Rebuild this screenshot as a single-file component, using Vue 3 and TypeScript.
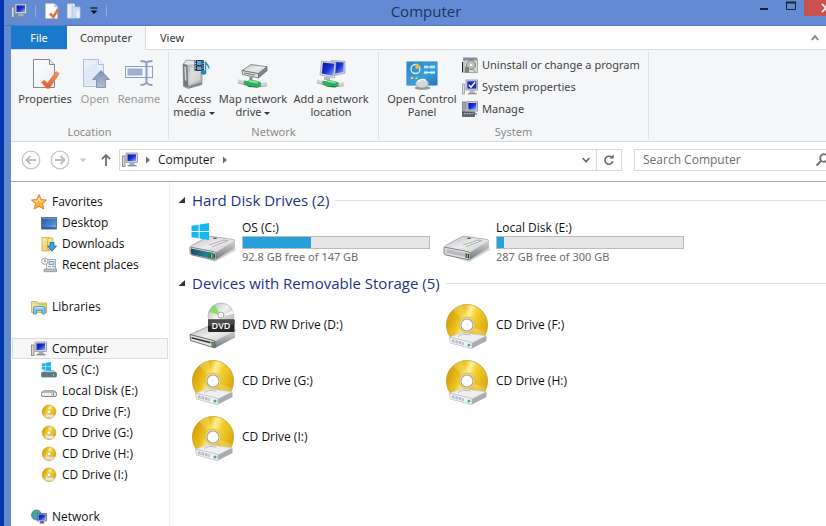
<script setup lang="ts">
import { ref } from 'vue'

interface RibbonButton {
  icon: string
  lines: string[]
  kind: string
  disabled?: boolean
  menu?: boolean
}

interface NavItem {
  icon: string
  label: string
}

interface NavSection {
  head: NavItem
  children: NavItem[]
}

interface Drive {
  icon: string
  name: string
  used?: number
  detail?: string
  badge?: string
}

interface DriveGroup {
  title: string
  drives: Drive[]
}

const locationButtons: RibbonButton[] = [
  { icon: 'i-properties', lines: ['Properties'], kind: 'w-properties' },
  { icon: 'i-open', lines: ['Open'], kind: 'w-open', disabled: true },
  { icon: 'i-rename', lines: ['Rename'], kind: 'w-rename', disabled: true },
]

const networkButtons: RibbonButton[] = [
  { icon: 'i-media', lines: ['Access', 'media'], kind: 'w-media', menu: true },
  { icon: 'i-mapdrive', lines: ['Map network', 'drive'], kind: 'w-map', menu: true },
  { icon: 'i-addnet', lines: ['Add a network', 'location'], kind: 'w-add' },
]

const systemLinks: NavItem[] = [
  { icon: 'i-uninstall', label: 'Uninstall or change a program' },
  { icon: 'i-sysprops', label: 'System properties' },
  { icon: 'i-manage', label: 'Manage' },
]

const sections: NavSection[] = [
  {
    head: { icon: 'i-star', label: 'Favorites' },
    children: [
      { icon: 'i-desktop', label: 'Desktop' },
      { icon: 'i-downloads', label: 'Downloads' },
      { icon: 'i-recent', label: 'Recent places' },
    ],
  },
  { head: { icon: 'i-libraries', label: 'Libraries' }, children: [] },
  {
    head: { icon: 'i-computer', label: 'Computer' },
    children: [
      { icon: 'i-os-small', label: 'OS (C:)' },
      { icon: 'i-disk-small', label: 'Local Disk (E:)' },
      { icon: 'i-cd-small', label: 'CD Drive (F:)' },
      { icon: 'i-cd-small', label: 'CD Drive (G:)' },
      { icon: 'i-cd-small', label: 'CD Drive (H:)' },
      { icon: 'i-cd-small', label: 'CD Drive (I:)' },
    ],
  },
  { head: { icon: 'i-network', label: 'Network' }, children: [] },
]

const groups: DriveGroup[] = [
  {
    title: 'Hard Disk Drives (2)',
    drives: [
      { icon: 'i-os', name: 'OS (C:)', used: 36.5, detail: '92.8 GB free of 147 GB' },
      { icon: 'i-disk', name: 'Local Disk (E:)', used: 4, detail: '287 GB free of 300 GB' },
    ],
  },
  {
    title: 'Devices with Removable Storage (5)',
    drives: [
      { icon: 'i-dvd', name: 'DVD RW Drive (D:)', badge: 'DVD' },
      { icon: 'i-cd', name: 'CD Drive (F:)' },
      { icon: 'i-cd', name: 'CD Drive (G:)' },
      { icon: 'i-cd', name: 'CD Drive (H:)' },
      { icon: 'i-cd', name: 'CD Drive (I:)' },
    ],
  },
]

const selected = ref<string>('Computer')
const query = ref<string>('')
</script>

<template>
  <div class="desktop">
    <svg class="sprite" aria-hidden="true">
      <defs>
        <linearGradient id="g-screen" x1="0" y1="0" x2="1" y2="1">
          <stop offset="0" stop-color="#0a12a8" /><stop offset="0.5" stop-color="#1a2fd0" /><stop offset="1" stop-color="#8fb4f5" />
        </linearGradient>
        <linearGradient id="g-gold" x1="0" y1="0.3" x2="1" y2="0.7">
          <stop offset="0" stop-color="#d09a08" /><stop offset="0.3" stop-color="#ecc31c" /><stop offset="0.45" stop-color="#fff199" />
          <stop offset="0.6" stop-color="#f2d02c" /><stop offset="1" stop-color="#d8a30e" />
        </linearGradient>
        <linearGradient id="g-top" x1="0" y1="0" x2="1" y2="1">
          <stop offset="0" stop-color="#b9babc" /><stop offset="0.5" stop-color="#ececed" /><stop offset="1" stop-color="#c4c5c7" />
        </linearGradient>
        <linearGradient id="g-side" x1="0" y1="0" x2="0" y2="1">
          <stop offset="0" stop-color="#d4d5d7" /><stop offset="1" stop-color="#77797c" />
        </linearGradient>
        <linearGradient id="g-teal" x1="0" y1="0" x2="1" y2="0">
          <stop offset="0" stop-color="#1b4a63" /><stop offset="0.7" stop-color="#23849a" /><stop offset="1" stop-color="#1c5f58" />
        </linearGradient>
        <linearGradient id="g-doc" x1="0" y1="0" x2="1" y2="1">
          <stop offset="0" stop-color="#ffffff" /><stop offset="1" stop-color="#eceef2" />
        </linearGradient>
        <linearGradient id="g-orange" x1="0" y1="0" x2="0" y2="1">
          <stop offset="0" stop-color="#f39a6a" /><stop offset="1" stop-color="#e05a28" />
        </linearGradient>
        <linearGradient id="g-arrow" x1="0" y1="0" x2="0" y2="1">
          <stop offset="0" stop-color="#7f91b5" /><stop offset="1" stop-color="#b4bed2" />
        </linearGradient>
        <linearGradient id="g-folder" x1="0" y1="0" x2="1" y2="1">
          <stop offset="0" stop-color="#fbeeb0" /><stop offset="1" stop-color="#e6bf55" />
        </linearGradient>
        <linearGradient id="g-panel" x1="0" y1="0" x2="1" y2="1">
          <stop offset="0" stop-color="#2a86c8" /><stop offset="0.6" stop-color="#3a9fdd" /><stop offset="1" stop-color="#2473b4" />
        </linearGradient>
        <linearGradient id="g-desk" x1="0" y1="0" x2="1" y2="1">
          <stop offset="0" stop-color="#2b55a3" /><stop offset="0.6" stop-color="#4a83cc" /><stop offset="1" stop-color="#88b8e8" />
        </linearGradient>
        <linearGradient id="g-silver" x1="0" y1="0" x2="1" y2="1">
          <stop offset="0" stop-color="#a9abad" /><stop offset="0.45" stop-color="#f4f4f4" /><stop offset="0.6" stop-color="#d2d4d5" /><stop offset="1" stop-color="#a4a6a8" />
        </linearGradient>
        <linearGradient id="g-tower" x1="0" y1="0" x2="1" y2="1">
          <stop offset="0" stop-color="#9c9ea0" /><stop offset="0.5" stop-color="#d6d7d8" /><stop offset="1" stop-color="#a2a4a6" />
        </linearGradient>
      </defs>

      <symbol id="i-computer" viewBox="0 0 16 16">
        <rect x="0.5" y="4" width="2.5" height="10.5" fill="#d6dbd2" stroke="#7a8078" stroke-width="0.8" />
        <rect x="4" y="1" width="11.5" height="9.5" rx="0.6" fill="#d5d8de" stroke="#8b8f99" stroke-width="0.8" />
        <rect x="5.5" y="2.4" width="8.5" height="6.7" fill="url(#g-screen)" />
        <path d="M8 10.8h4l1 2.2H7z" fill="#a9adb3" />
        <path d="M5.5 13h9v1.4h-9z" fill="#8a8e95" />
      </symbol>

      <symbol id="i-check-doc" viewBox="0 0 16 16">
        <path d="M1.5 0.5h9l3 3v12h-12z" fill="#fbfbfc" stroke="#b7bac2" stroke-width="0.8" />
        <path d="M10.5 0.5v3h3" fill="#dfe2e8" stroke="#a5a9b2" stroke-width="0.8" />
        <path d="M6 10.5l3.3 3.4L14 6.2" fill="none" stroke="#e8713f" stroke-width="2.6" />
      </symbol>

      <symbol id="i-new-folder" viewBox="0 0 16 16">
        <path d="M0.500 1h7v14H0.500z" fill="#e8edf6" stroke="#c8d2e4" />
        <path d="M7 4h6v11H5V2.5z" fill="#cfdaec" stroke="#b3c3de" stroke-width="0.8" />
        <path d="M9.500 7L12.500 8v7h-3z" fill="#e9eff8" />
      </symbol>

      <symbol id="i-properties" viewBox="0 0 32 32">
        <path d="M4.500 1.500h16l5 5v23h-21z" fill="url(#g-doc)" stroke="#85888e" />
        <path d="M20.500 1.500v5h5" fill="#e6e8ec" stroke="#85888e" />
        <path d="M12.500 24.500l2.700-2.400 3.300 3.100 8.700-11.700 3 2-9.800 14.800h-2.800z" fill="url(#g-orange)" stroke="#e07a50" stroke-width="0.7" />
      </symbol>

      <symbol id="i-open" viewBox="0 0 32 32">
        <path d="M4.500 1.500h15l5 5v22h-20z" fill="#e9eff9" stroke="#aebfdc" />
        <path d="M5 14L19 3v24H5z" fill="#dfe8f6" />
        <path d="M19.500 1.500v5h5" fill="#f5f8fc" stroke="#aebfdc" />
        <path d="M22 12.500l8.500 9h-4v8h-9v-8h-4z" fill="url(#g-arrow)" stroke="#7486ab" stroke-width="0.8" />
      </symbol>

      <symbol id="i-rename" viewBox="0 0 32 32">
        <rect x="2.500" y="8.500" width="27" height="11" fill="#f0f4fb" stroke="#8ba0c6" />
        <rect x="5" y="11" width="14" height="6" fill="#a3b2cc" stroke="#8799b9" stroke-width="0.7" />
        <path d="M17.500 3c3 0 5 0.500 6 2 1-1.500 3-2 6-2M23.500 5v20M17.500 27c3 0 5-0.800 6-2.500 1 1.700 3 2.500 6 2.500" fill="none" stroke="#8f9fbd" stroke-width="2" />
      </symbol>

      <symbol id="i-media" viewBox="0 0 32 32">
        <path d="M5 6l3.500-4L24 3.500v23L10 30.500 5.500 28.500z" fill="url(#g-tower)" stroke="#8d8f91" stroke-width="0.700" />
        <path d="M5 6l4.500 1 1 23L5.500 28z" fill="#77797b" />
        <path d="M6.300 8.500l1.700 0.500 0.500 14-1.500-0.800z" fill="#d4d5d6" />
        <path d="M6 5.500l3-3L24 4v1.500L9.500 6.800z" fill="#e6e7e8" />
        <path d="M12 10l10-1v13l-9 3z" fill="#e4e5e6" opacity="0.500" />
        <path d="M10.500 28l13.500-4v2.500l-13.500 4z" fill="#858789" />
        <rect x="16.500" y="2" width="9.500" height="11" fill="#293846" />
        <path d="M19 3h4.500v4H19zM19 8.500h4.500v3.500H19z" fill="#5da8d8" />
        <path d="M17.500 2.500v10M25 2.500v10" stroke="#d9e3ec" stroke-dasharray="1.200 1.200" />
        <path d="M27.500 14V3.500c0.500 3 3.500 3.500 3.500 7" fill="none" stroke="#2a93cf" stroke-width="1.500" />
        <ellipse cx="25.600" cy="14.500" rx="2.700" ry="2.200" fill="#1f86c6" />
      </symbol>

      <symbol id="i-cable" viewBox="0 0 32 10">
        <path d="M1 3l7 2M23 7l7-1" stroke="#d2d4d4" stroke-width="3.600" />
        <path d="M1 5l7 1.800M23 8.800l7-1" stroke="#9b9d9d" stroke-width="0.800" />
        <path d="M7 2.500l4 0.500 1.500-1.500 8 1.500 3.500 1.500v4L12 8 6.500 6.500z" fill="#2fae5b" />
        <path d="M12 2l9 1.600v2L12 4z" fill="#8fe0a6" />
        <path d="M7 6.500l5.500 1.500L24 8.500l-4 1.200-8-0.700z" fill="#13773a" />
      </symbol>

      <symbol id="i-mapdrive" viewBox="0 0 32 32">
        <path d="M5 12.500L14 6.500l16 2.200-8.500 7z" fill="url(#g-top)" stroke="#7d7f81" stroke-width="0.8" />
        <path d="M5 12.500l16.500 3.200V20L5.500 16.500z" fill="#dedfe0" stroke="#67696b" stroke-width="0.8" />
        <path d="M21.500 15.700L30 8.700v4L21.500 20z" fill="#85878a" stroke="#67696b" stroke-width="0.8" />
        <path d="M7 14.300l11 2.300v1.200L7 15.500z" fill="#85878a" />
        <path d="M14 19v3" stroke="#8a8c8e" stroke-width="3" />
        <use href="#i-cable" x="0" y="20" width="32" height="10" />
      </symbol>

      <symbol id="i-addnet" viewBox="0 0 32 32">
        <path d="M16 2.500l14 0.800v12L17 18z" fill="#c7cdda" stroke="#969eae" stroke-width="0.7" />
        <path d="M18 4l10.500 0.600v9.400L18 16z" fill="url(#g-screen)" />
        <path d="M6.500 3l14.500 1.500L19.500 20 5 17z" fill="#d7dbe4" stroke="#969eae" stroke-width="0.7" />
        <path d="M8 4.600l11.500 1.200L18.300 18 6.700 15.600z" fill="url(#g-screen)" />
        <path d="M9 19h6v3H9z" fill="#b3b8c2" />
        <use href="#i-cable" x="1" y="20" width="30" height="10" />
      </symbol>

      <symbol id="i-panel" viewBox="0 0 32 32">
        <rect x="0.500" y="3.500" width="31" height="24" rx="1" fill="url(#g-panel)" stroke="#89b5d6" />
        <circle cx="9.500" cy="11" r="4.500" fill="none" stroke="#d5effd" stroke-width="1.300" />
        <path d="M9.500 11V5.500a5 5 0 0 1 5 5z" fill="#f5b942" />
        <path d="M18 7.500h4v3h-4zM24 7.500h5v3h-5zM18 13h4v3h-4zM24 13h5v3h-5z" fill="#8fcdf2" />
        <path d="M18 9h11M18 14.500h11" stroke="#eaf8ff" />
        <circle cx="6" cy="20" r="1.300" fill="#f2c95e" /><circle cx="10.500" cy="20" r="1.300" fill="#9ed67c" />
        <ellipse cx="16.500" cy="30" rx="8" ry="1.700" fill="#8f9aa4" />
        <ellipse cx="16" cy="25.500" rx="6.500" ry="4.500" fill="#d5d8db" stroke="#8c949a" stroke-width="0.7" />
        <path d="M12 24c1-2.500 5-3.500 8-1.500" fill="none" stroke="#ffffff" stroke-width="1.300" />
      </symbol>

      <symbol id="i-uninstall" viewBox="0 0 16 16">
        <rect x="2" y="2" width="13.500" height="13.500" fill="#d8dcd6" stroke="#969b94" stroke-width="0.8" />
        <rect x="1" y="0.500" width="14" height="3" fill="#8488ae" />
        <path d="M0.500 5v10.500" stroke="#222" stroke-width="1.200" />
        <circle cx="9" cy="8" r="4.500" fill="#b7c1b9" stroke="#7e877f" />
        <circle cx="9" cy="8" r="1.300" fill="#fff" />
        <path d="M3 9.500l4 1v5H3z" fill="#7b837d" /><path d="M10 12l4 3.500" stroke="#848a80" />
        <path d="M11 2.500l3-1v2z" fill="#d49a4a" />
      </symbol>

      <symbol id="i-sysprops" viewBox="0 0 16 16">
        <rect x="0.500" y="5" width="2" height="10" fill="#dcdfe2" stroke="#8a8d90" stroke-width="0.7" />
        <rect x="4" y="1" width="11.500" height="10" fill="#d6d9df" stroke="#8a8e98" stroke-width="0.8" />
        <rect x="5.300" y="2.300" width="9" height="7.300" fill="#1a2cc4" />
        <path d="M7 6l2 2.200 4-5" fill="none" stroke="#fff" stroke-width="1.500" />
        <path d="M8 11.200h4l1 3H7z" fill="#b1b4b9" /><path d="M6 14h8.500v1.300H6z" fill="#888b90" />
      </symbol>

      <symbol id="i-manage" viewBox="0 0 16 16">
        <rect x="0.500" y="1" width="3.500" height="10" fill="#9fa7a5" stroke="#6f7675" stroke-width="0.7" />
        <rect x="5" y="0.700" width="10.500" height="9.300" fill="#d4d7e2" stroke="#8287a0" stroke-width="0.8" />
        <rect x="6.300" y="2" width="8" height="6.600" fill="url(#g-screen)" />
        <path d="M3 8h4l2 2v2H3z" fill="#aab3b4" />
        <rect x="0.500" y="11" width="12" height="4.500" fill="#5c6670" stroke="#414b55" stroke-width="0.7" />
        <path d="M2 12.700h9" stroke="#c7d0d6" stroke-dasharray="1.500 1" /><path d="M11 11l4 2.500" stroke="#777e87" stroke-width="1.200" />
      </symbol>

      <symbol id="i-star" viewBox="0 0 16 16">
        <path d="M8 0.600l2.200 5 5.300 0.500-4 3.600 1.200 5.300L8 12.200 3.300 15l1.200-5.300-4-3.600 5.300-0.500z" fill="#f9b64a" stroke="#e27a1c" stroke-width="1" />
        <path d="M8 3l1.400 3.500 3 0.300-3 1.500L8 6.500 5 8 3 6.800l3.400-0.300z" fill="#fde9a8" />
      </symbol>

      <symbol id="i-desktop" viewBox="0 0 16 16">
        <rect x="0.500" y="2.500" width="15" height="11.500" fill="url(#g-desk)" stroke="#5c7796" />
        <path d="M1 12.500h14v1.200H1z" fill="#264a80" />
        <path d="M1.500 3.500h13" stroke="#7ba4da" stroke-width="0.7" />
      </symbol>

      <symbol id="i-downloads" viewBox="0 0 16 16">
        <path d="M1 1.500h8V15H1z" fill="url(#g-folder)" stroke="#d0a945" stroke-width="0.8" />
        <path d="M9 2h3v11H6.500V3z" fill="#f8dd86" stroke="#d0a945" stroke-width="0.7" />
        <path d="M9 6.500h4V10h2.500L11 15.300 6.500 10H9z" fill="#3aa0e4" stroke="#1967b0" stroke-width="0.8" />
      </symbol>

      <symbol id="i-recent" viewBox="0 0 16 16">
        <path d="M5.500 2.500h9V14h-9z" fill="#edf3f8" stroke="#8d99a4" stroke-width="0.8" />
        <path d="M3 12h12.500v2.700H3z" fill="#bac2c8" stroke="#8a939a" stroke-width="0.7" />
        <path d="M8 4.500h5v3H8zM7 9.500h3M11 9.500h3" fill="#c8dcef" stroke="#6892b9" stroke-width="0.8" />
        <circle cx="3.800" cy="4.200" r="3.200" fill="#fafbfb" stroke="#8c9298" stroke-width="0.8" />
        <path d="M3.800 2.200v2.200h1.600" fill="none" stroke="#555" stroke-width="0.7" />
      </symbol>

      <symbol id="i-libraries" viewBox="0 0 16 16">
        <path d="M0.500 2.500h5l1.500 1.500h8.500v9.500h-15z" fill="url(#g-folder)" stroke="#cfa649" stroke-width="0.8" />
        <path d="M1.500 4h5l1 1.500h7" fill="none" stroke="#9fcf76" stroke-width="0.8" />
        <path d="M2.500 15V9.500q0-2 2-2h7.500q2 0 2 2V15h-3v-3.500H5.500V15z" fill="#7cc2e6" stroke="#3d8fc0" stroke-width="0.8" />
        <path d="M3.500 9.300q0.300-1 1.300-1h7q1 0 1.300 1z" fill="#d6f0fb" />
      </symbol>

      <symbol id="i-flag" viewBox="0 0 20 18">
        <path d="M0.500 3l7.500-1.200v6.700H0.500zM9 1.600L19 0v8.500H9zM0.500 9.500H8v6.700L0.500 15zM9 9.500h10V18L9 16.400z" fill="#14b8ee" />
      </symbol>

      <symbol id="i-os-small" viewBox="0 0 16 16">
        <path d="M0.500 11l3-2.500h9l3 2.500z" fill="#c9cccf" stroke="#8d9093" stroke-width="0.6" />
        <rect x="0.500" y="10.500" width="15" height="4.500" rx="1" fill="#4f7e8a" stroke="#6f7578" stroke-width="0.8" />
        <path d="M12.500 12v2" stroke="#7be06a" />
        <use href="#i-flag" x="0.500" y="0" width="10" height="9" />
      </symbol>

      <symbol id="i-disk-small" viewBox="0 0 16 16">
        <path d="M0.500 9.500L3 7.500h10l2.500 2z" fill="#dddfe0" stroke="#8d8f91" stroke-width="0.7" />
        <rect x="0.500" y="9" width="15" height="4.500" rx="1.500" fill="#eceded" stroke="#77797b" stroke-width="0.9" />
        <path d="M10.500 11.300h1M12.500 10.300v2" stroke="#5a8a4a" />
      </symbol>

      <symbol id="i-cd-small" viewBox="0 0 16 16">
        <circle cx="8" cy="7.800" r="6.800" fill="url(#g-gold)" stroke="#c4961a" stroke-width="0.6" />
        <circle cx="8" cy="7.800" r="2" fill="#fff" stroke="#c9a24c" stroke-width="0.7" />
        <path d="M3.500 11.500l3-1 7 0.500-2 3-6.500-0.500z" fill="#ece6d6" stroke="#cbbf9c" stroke-width="0.5" />
      </symbol>

      <symbol id="i-network" viewBox="0 0 16 16">
        <circle cx="5.500" cy="6" r="5" fill="#3f9fd0" stroke="#2a6f9f" stroke-width="0.7" />
        <path d="M2 3.500q3-3 6-1.500l-2 2.500-3 1.500zM1.500 7l3 1 1 3q-3-1-4-4z" fill="#49b35a" />
        <rect x="6.500" y="4.500" width="9" height="7.500" fill="#c9cfdb" stroke="#4c5a80" stroke-width="0.7" />
        <rect x="7.500" y="5.500" width="7" height="5.500" fill="url(#g-screen)" />
        <path d="M9.500 12h3l1 2.500H8.500z" fill="#58658a" />
      </symbol>

      <symbol id="i-disk" viewBox="0 0 48 48">
        <path d="M4 37l21 5 21-12 1 2-21 12z" fill="#bfc0c2" opacity="0.700" />
        <path d="M1 30q0-1.500 1.500-2.500L18 19q2-1 4-0.700l22.500 3.200q2 0.500 1 2L27 35z" fill="url(#g-top)" stroke="#97999b" stroke-width="0.7" />
        <path d="M27 34.500l19-12v6.500q0 1-1 1.500L27 41.500z" fill="url(#g-side)" />
        <path d="M1 30q0-1 1.500-0.700L25 33.700q2 0.500 2 2v4.500q0 2-2 1.500L3 37q-2-0.600-2-2z" fill="#dcdddf" stroke="#696b6e" stroke-width="0.800" />
        <path d="M3.500 31.300L22 35.200v3.600L3.500 35z" fill="#b9babe" />
        <path d="M22.500 35.300l3.500 0.700v4.500l-3.500-0.800z" fill="#343a33" /><path d="M24.300 36.300v3.500" stroke="#5fe03c" stroke-width="1.300" />
        <path d="M20 27l15-5 4 0.600-16 6.200" fill="none" stroke="#aeb0b2" /><ellipse cx="26" cy="20.300" rx="2" ry="0.800" fill="#55585b" />
      </symbol>

      <symbol id="i-os" viewBox="0 0 48 48">
        <use href="#i-disk" width="48" height="48" />
        <path d="M2 30.500L24.500 35v6L3.500 36.500q-1.500-0.500-1.500-2z" fill="url(#g-teal)" />
        <path d="M22.800 35.500v4.500" stroke="#78dd48" stroke-width="1.300" />
        <use href="#i-flag" x="2" y="5" width="19" height="17" />
      </symbol>

      <symbol id="i-dvd" viewBox="0 0 48 48">
        <path d="M1 33.500L20 25l25 3.500q2 0.500 1 2L26 41z" fill="url(#g-top)" stroke="#8b8d8f" stroke-width="0.7" />
        <path d="M26 40.500l20-11v7L26 47z" fill="url(#g-side)" />
        <path d="M1 33.500l25 6.500v7L1.500 39.500z" fill="#e5e6e7" stroke="#4f5153" stroke-width="0.800" />
        <path d="M2.500 36l19 4.800v1.800l-19-5z" fill="#303234" />
        <path d="M22.500 40.500l3 0.700V46l-3-0.800z" fill="#343a33" /><path d="M24 41.500V45" stroke="#5fe03c" stroke-width="1.300" />
        <circle cx="32" cy="15" r="13" fill="url(#g-silver)" stroke="#b3b5b7" stroke-width="0.7" />
        <path d="M32 15L20 10.500q2-5 6-7z" fill="#7edc58" opacity="0.800" /><path d="M32 15l12.500-2v-4z" fill="#fff" opacity="0.800" />
        <circle cx="32" cy="14" r="3" fill="#fff" stroke="#a9abad" />
        <rect x="19" y="18.500" width="26.500" height="12.500" rx="1" fill="#262728" />
        <path d="M19 18.500h26.500v5L19 25z" fill="#4a4b4c" />
      </symbol>

      <symbol id="i-cd" viewBox="0 0 48 48">
        <circle cx="24" cy="24" r="20.600" fill="url(#g-gold)" stroke="#c29a25" stroke-width="0.7" />
        <path d="M24 24L10 8.500q4-4 9-5zM24 24l19 7q-2 5-5 8z" fill="#fff6b8" opacity="0.250" />
        <circle cx="24" cy="24" r="8" fill="#f0dc91" stroke="#d2b24c" stroke-width="0.7" />
        <circle cx="24" cy="24" r="6" fill="#fff" stroke="#b1a98f" stroke-width="1.200" />
        <path d="M7 36l12-4.500 24 3.300L29 42.500z" fill="#eeeff2" stroke="#c3c5ca" stroke-width="0.6" />
        <path d="M29 42l14.500-7v5L29 47.500z" fill="#a9acb5" />
        <path d="M6.500 36L29 41.500v6.300L7.500 42z" fill="#f2f3f6" stroke="#b5b8c1" stroke-width="0.7" />
        <path d="M9 38l12 3.200v3L9 41z" fill="#b9bcc8" /><path d="M12 38.500v3.300M15.500 39.500v3.300M19 40.500v3.300" stroke="#eef0f4" stroke-width="0.800" />
        <circle cx="26" cy="44" r="1.600" fill="#35c25a" />
        <path d="M15 35.500l5-2.500 7 1" fill="none" stroke="#b8a470" stroke-width="0.700" />
      </symbol>
    </svg>

    <div class="window">
      <header class="titlebar">
        <div class="quick">
          <svg class="s16"><use href="#i-computer" /></svg>
          <span class="quick-rule"></span>
          <button type="button" class="plain" aria-label="Properties"><svg class="s16"><use href="#i-check-doc" /></svg></button>
          <button type="button" class="plain" aria-label="New folder"><svg class="s16"><use href="#i-new-folder" /></svg></button>
          <button type="button" class="plain" aria-label="Customize Quick Access Toolbar">
            <svg class="s8" viewBox="0 0 8 8"><path d="M0.500 1h7" stroke="#111" stroke-width="1.200" /><path d="M0.500 3.500h7L4 7z" fill="#111" /></svg>
          </button>
          <span class="quick-rule"></span>
        </div>
        <h1 class="title">Computer</h1>
        <div class="caption">
          <button type="button" class="cap" aria-label="Minimize"><svg width="12" height="12" viewBox="0 0 12 12"><path d="M2 9h8" stroke="#1c2430" stroke-width="2" /></svg></button>
          <button type="button" class="cap" aria-label="Maximize"><svg width="12" height="12" viewBox="0 0 12 12"><path d="M1.500 2v7.500h9V2" fill="none" stroke="#1c2430" /><path d="M1 2.500h10" stroke="#1c2430" stroke-width="2" /></svg></button>
          <button type="button" class="cap close" aria-label="Close"><svg width="10" height="10" viewBox="0 0 10 10"><path d="M1 1l8 8M9 1L1 9" stroke="#fff" stroke-width="1.600" /></svg></button>
        </div>
      </header>

      <div class="client">
        <div class="tabs" role="tablist">
          <button type="button" class="tab file" role="tab" aria-selected="false">File</button>
          <button type="button" class="tab current" role="tab" aria-selected="true">Computer</button>
          <button type="button" class="tab view" role="tab" aria-selected="false">View</button>
          <button type="button" class="collapse" aria-label="Minimize the Ribbon">
            <svg width="8" height="8" viewBox="0 0 8 8"><path d="M0.700 6L4 2.200 7.300 6" fill="none" stroke="#808080" stroke-width="1.800" /></svg>
          </button>
        </div>

        <div class="ribbon">
          <section class="group g-location">
            <div class="tools">
              <button v-for="b in locationButtons" :key="b.icon" type="button" class="big" :class="b.kind" :disabled="b.disabled">
                <svg class="s32"><use :href="'#' + b.icon" /></svg>
                <span v-for="l in b.lines" :key="l">{{ l }}</span>
              </button>
            </div>
            <div class="group-name">Location</div>
          </section>
          <section class="group g-network">
            <div class="tools">
              <button v-for="b in networkButtons" :key="b.icon" type="button" class="big" :class="b.kind">
                <svg class="s32"><use :href="'#' + b.icon" /></svg>
                <span v-for="(l, n) in b.lines" :key="l">{{ l }}<i v-if="b.menu && n === 1" class="caret"></i></span>
              </button>
            </div>
            <div class="group-name">Network</div>
          </section>
          <section class="group g-system">
            <div class="tools">
              <button type="button" class="big w-panel">
                <svg class="s32"><use href="#i-panel" /></svg>
                <span>Open Control</span>
                <span>Panel</span>
              </button>
              <div class="stack">
                <button v-for="s in systemLinks" :key="s.icon" type="button" class="small">
                  <svg class="s16"><use :href="'#' + s.icon" /></svg>{{ s.label }}
                </button>
              </div>
            </div>
            <div class="group-name">System</div>
          </section>
        </div>

        <div class="navbar">
          <div class="history">
            <button type="button" class="plain" aria-label="Back">
              <svg width="20" height="20" viewBox="0 0 20 20"><circle cx="10" cy="10" r="8.800" fill="none" stroke="#c6c6c6" stroke-width="1.300" /><path d="M15 10H6M9.500 6L5.500 10l4 4" fill="none" stroke="#bdbdbd" stroke-width="1.800" /></svg>
            </button>
            <button type="button" class="plain" aria-label="Forward">
              <svg width="20" height="20" viewBox="0 0 20 20"><circle cx="10" cy="10" r="8.800" fill="none" stroke="#c6c6c6" stroke-width="1.300" /><path d="M5 10h9M10.500 6l4 4-4 4" fill="none" stroke="#bdbdbd" stroke-width="1.800" /></svg>
            </button>
            <button type="button" class="plain" aria-label="Recent locations">
              <svg class="s8" viewBox="0 0 8 8"><path d="M0.500 2.500h7L4 6z" fill="#c9c9c9" /></svg>
            </button>
          </div>
          <button type="button" class="plain up" aria-label="Up">
            <svg width="14" height="14" viewBox="0 0 14 14"><path d="M7 13V2M3 6.200L7 2l4 4.200" fill="none" stroke="#6f6f6f" stroke-width="1.800" /></svg>
          </button>
          <div class="address">
            <svg class="s16"><use href="#i-computer" /></svg>
            <svg class="s8" viewBox="0 0 8 8"><path d="M2 0.500L6 4 2 7.500z" fill="#6f6f6f" /></svg>
            <button type="button" class="crumb">Computer</button>
            <svg class="s8" viewBox="0 0 8 8"><path d="M2 0.500L6 4 2 7.500z" fill="#6f6f6f" /></svg>
            <button type="button" class="drop" aria-label="Previous locations">
              <svg class="s8" viewBox="0 0 8 8"><path d="M0.700 2L4 5.800 7.300 2" fill="none" stroke="#666" stroke-width="1.600" /></svg>
            </button>
            <button type="button" class="refresh" aria-label="Refresh">
              <svg width="12" height="12" viewBox="0 0 12 12"><path d="M9.800 7.300A4 4 0 1 1 8.500 3.200" fill="none" stroke="#666" stroke-width="1.600" /><path d="M6.500 4.500h4.200V0.500z" fill="#666" /></svg>
            </button>
          </div>
          <div class="search">
            <input v-model="query" type="text" placeholder="Search Computer" aria-label="Search Computer" />
            <svg width="16" height="14" viewBox="0 0 16 14"><circle cx="9" cy="5" r="3.800" fill="none" stroke="#6f6f6f" stroke-width="1.800" /><path d="M6 8l-4.500 4.500" stroke="#6f6f6f" stroke-width="2" /></svg>
          </div>
        </div>

        <div class="body">
          <nav class="side" aria-label="Navigation pane">
            <ul v-for="s in sections" :key="s.head.label" class="section">
              <li>
                <a href="#" class="row" :class="{ on: selected === s.head.label }" @click.prevent="selected = s.head.label">
                  <svg class="s16"><use :href="'#' + s.head.icon" /></svg>{{ s.head.label }}
                </a>
              </li>
              <li v-for="c in s.children" :key="c.label">
                <a href="#" class="row child" :class="{ on: selected === c.label }" @click.prevent="selected = c.label">
                  <svg class="s16"><use :href="'#' + c.icon" /></svg>{{ c.label }}
                </a>
              </li>
            </ul>
          </nav>

          <main class="main">
            <section v-for="g in groups" :key="g.title">
              <h2 class="heading">
                <svg class="s8" viewBox="0 0 8 8"><path d="M7 1v6H0.500z" fill="#333" /></svg>
                {{ g.title }}
              </h2>
              <div class="drives">
                <a v-for="d in g.drives" :key="d.name" href="#" class="drive" @click.prevent>
                  <svg class="s48" viewBox="0 0 48 48">
                    <use :href="'#' + d.icon" width="48" height="48" />
                    <text v-if="d.badge" class="badge" x="32" y="28" text-anchor="middle">{{ d.badge }}</text>
                  </svg>
                  <span class="info">
                    <span class="name">{{ d.name }}</span>
                    <span v-if="d.used !== undefined" class="bar"><span class="fill" :style="{ width: d.used + '%' }"></span></span>
                    <span v-if="d.detail" class="detail">{{ d.detail }}</span>
                  </span>
                </a>
              </div>
            </section>
          </main>
        </div>
      </div>
    </div>
  </div>
</template>

<style>
body {
  overflow: hidden;
}
</style>

<style scoped>
* {
  box-sizing: border-box;
}

.desktop {
  height: 100vh;
  padding-left: 4px;
  overflow: hidden;
  background: #0437ac;
  font-family: 'Open Sans', 'Noto Sans', sans-serif;
  font-size: 12px;
  line-height: 16px;
  color: #1b1b1b;
}

.sprite {
  position: absolute;
  width: 0;
  height: 0;
}

button {
  border: 0;
  padding: 0;
  margin: 0;
  background: none;
  font: inherit;
  color: inherit;
}

svg {
  display: block;
  flex: none;
}

.s8 { width: 8px; height: 8px; }
.s16 { width: 16px; height: 16px; }
.s32 { width: 32px; height: 32px; }
.s48 { width: 48px; height: 48px; }

/* The window runs a little past the right edge of the desktop. */
.window {
  display: flex;
  flex-direction: column;
  height: 100%;
  margin-right: -22px;
  background: #628bd3;
}

.titlebar {
  display: grid;
  grid-template-columns: 1fr auto 1fr;
  height: 26px;
  border-bottom: 1px solid #5076bd;
}

.quick {
  display: flex;
  align-items: center;
  gap: 7px;
  height: 22px;
  padding-left: 7px;
}

.quick-rule {
  width: 1px;
  height: 12px;
  margin: 0 1px;
  background: #9aa9c6;
}

.plain {
  display: flex;
}

.title {
  margin: 0;
  font-size: 15px;
  font-weight: 400;
  line-height: 22px;
  color: #1b3560;
}

.caption {
  display: flex;
  justify-content: flex-end;
  align-items: flex-start;
}

.cap {
  display: flex;
  justify-content: center;
  width: 27px;
  height: 16px;
}

.cap.close {
  align-items: center;
  width: 44px;
  background: #c9504f;
}

.client {
  display: flex;
  flex: 1;
  flex-direction: column;
  min-height: 0;
  margin: 0 7px;
  background: #fff;
}

.tabs,
.ribbon,
.detail {
  font-family: 'Noto Sans', 'Open Sans', sans-serif;
  font-size: 11px;
}

.tabs {
  display: flex;
  height: 24px;
  border-bottom: 1px solid #d8dadc;
}

.tab {
  height: 24px;
  padding: 0 14px;
  color: #3b3b3b;
}

.tab.file {
  width: 56px;
  height: 23px;
  background: #1979ca;
  color: #fff;
}

.tab.current {
  width: 79px;
  padding: 0;
  border-right: 1px solid #d8dadc;
  background: #f5f6f7;
}

.collapse {
  display: flex;
  align-items: center;
  margin-left: auto;
  padding-right: 22px;
}

.ribbon {
  display: flex;
  height: 92px;
  padding: 2px 0;
  border-bottom: 1px solid #d8dadc;
  background: #f5f6f7;
  color: #444;
}

.group {
  display: flex;
  flex-direction: column;
  justify-content: space-between;
  border-right: 1px solid #e0e1e2;
}

.g-location { width: 158px; }
.g-network { width: 210px; }
.g-system { width: 270px; }

.tools {
  display: flex;
  align-items: flex-start;
  padding: 2px 4px 0;
}

.big {
  display: flex;
  flex-direction: column;
  align-items: center;
  padding-top: 4px;
  line-height: 13px;
  white-space: nowrap;
}

.big svg {
  margin-bottom: 2px;
}

.big:disabled {
  color: #9a9a9a;
}

.w-properties { width: 60px; }
.w-open { width: 40px; }
.w-rename { width: 48px; }
.w-media { width: 42px; }
.w-map { width: 76px; }
.w-add { width: 80px; }
.w-panel { width: 78px; }

.caret {
  display: inline-block;
  margin-left: 3px;
  border: 3px solid transparent;
  border-top-color: #333;
  border-bottom-width: 0;
  vertical-align: middle;
}

.stack {
  display: flex;
  flex-direction: column;
  padding-left: 1px;
}

.small {
  display: flex;
  align-items: center;
  gap: 4px;
  height: 22px;
  white-space: nowrap;
}

.group-name {
  line-height: 14px;
  text-align: center;
  color: #8c8c8c;
}

.navbar {
  display: flex;
  align-items: center;
  gap: 6px;
  height: 40px;
  padding: 0 6px 3px 10px;
  border-bottom: 1px solid #a4a6a8;
}

.history {
  display: flex;
  align-items: center;
  gap: 9px;
}

.up {
  padding-left: 6px;
}

.address {
  display: flex;
  flex: 1;
  align-items: center;
  gap: 6px;
  height: 22px;
  padding-left: 2px;
  border: 1px solid #d9d9d9;
}

.drop {
  display: flex;
  margin-left: auto;
}

.refresh {
  display: flex;
  align-items: center;
  justify-content: center;
  width: 25px;
  height: 20px;
  border-left: 1px solid #d9d9d9;
}

.search {
  display: flex;
  align-items: center;
  width: 201px;
  height: 22px;
  padding: 0 3px 0 8px;
  margin-left: 6px;
  border: 1px solid #d9d9d9;
}

.search input {
  flex: 1;
  min-width: 0;
  padding: 0;
  border: 0;
  outline: 0;
  background: none;
  font: inherit;
  color: #222;
}

.search input::placeholder {
  color: #6d6d6d;
}

.body {
  display: flex;
  flex: 1;
  min-height: 0;
  overflow: hidden;
}

.side {
  width: 159px;
  padding: 9px 1px 0;
  border-right: 1px solid #f0f0f0;
}

.section {
  margin: 0 0 21px;
  padding: 0;
  list-style: none;
}

.row {
  display: flex;
  align-items: center;
  gap: 5px;
  height: 21px;
  padding-left: 18px;
  border: 1px solid transparent;
  color: #111;
  text-decoration: none;
  white-space: nowrap;
}

.row.child {
  padding-left: 28px;
}

.row.on {
  border-color: #dcdcdc;
  background: #f7f7f7;
}

.main {
  flex: 1;
  min-width: 0;
  padding: 5px 0 0 8px;
}

.heading {
  display: flex;
  align-items: center;
  gap: 6px;
  height: 27px;
  margin: 0;
  padding-bottom: 1px;
  font-size: 15px;
  font-weight: 400;
  color: #1e3287;
}

.heading::after {
  content: '';
  flex: 1;
  height: 1px;
  background: #e0e0e2;
}

.drives {
  display: grid;
  grid-template-columns: repeat(auto-fill, 254px);
  padding-left: 11px;
}

.drive {
  display: flex;
  align-items: center;
  gap: 5px;
  height: 56px;
  color: #111;
  text-decoration: none;
}

.badge {
  font-size: 9px;
  font-weight: 600;
  fill: #fff;
}

.info {
  display: flex;
  flex-direction: column;
  width: 188px;
}

.bar {
  height: 13px;
  border: 1px solid #bcbcbc;
  background: #e6e6e6;
}

.fill {
  display: block;
  height: 100%;
  background: #26a0da;
}

.detail {
  color: #6d6d6d;
}
</style>
